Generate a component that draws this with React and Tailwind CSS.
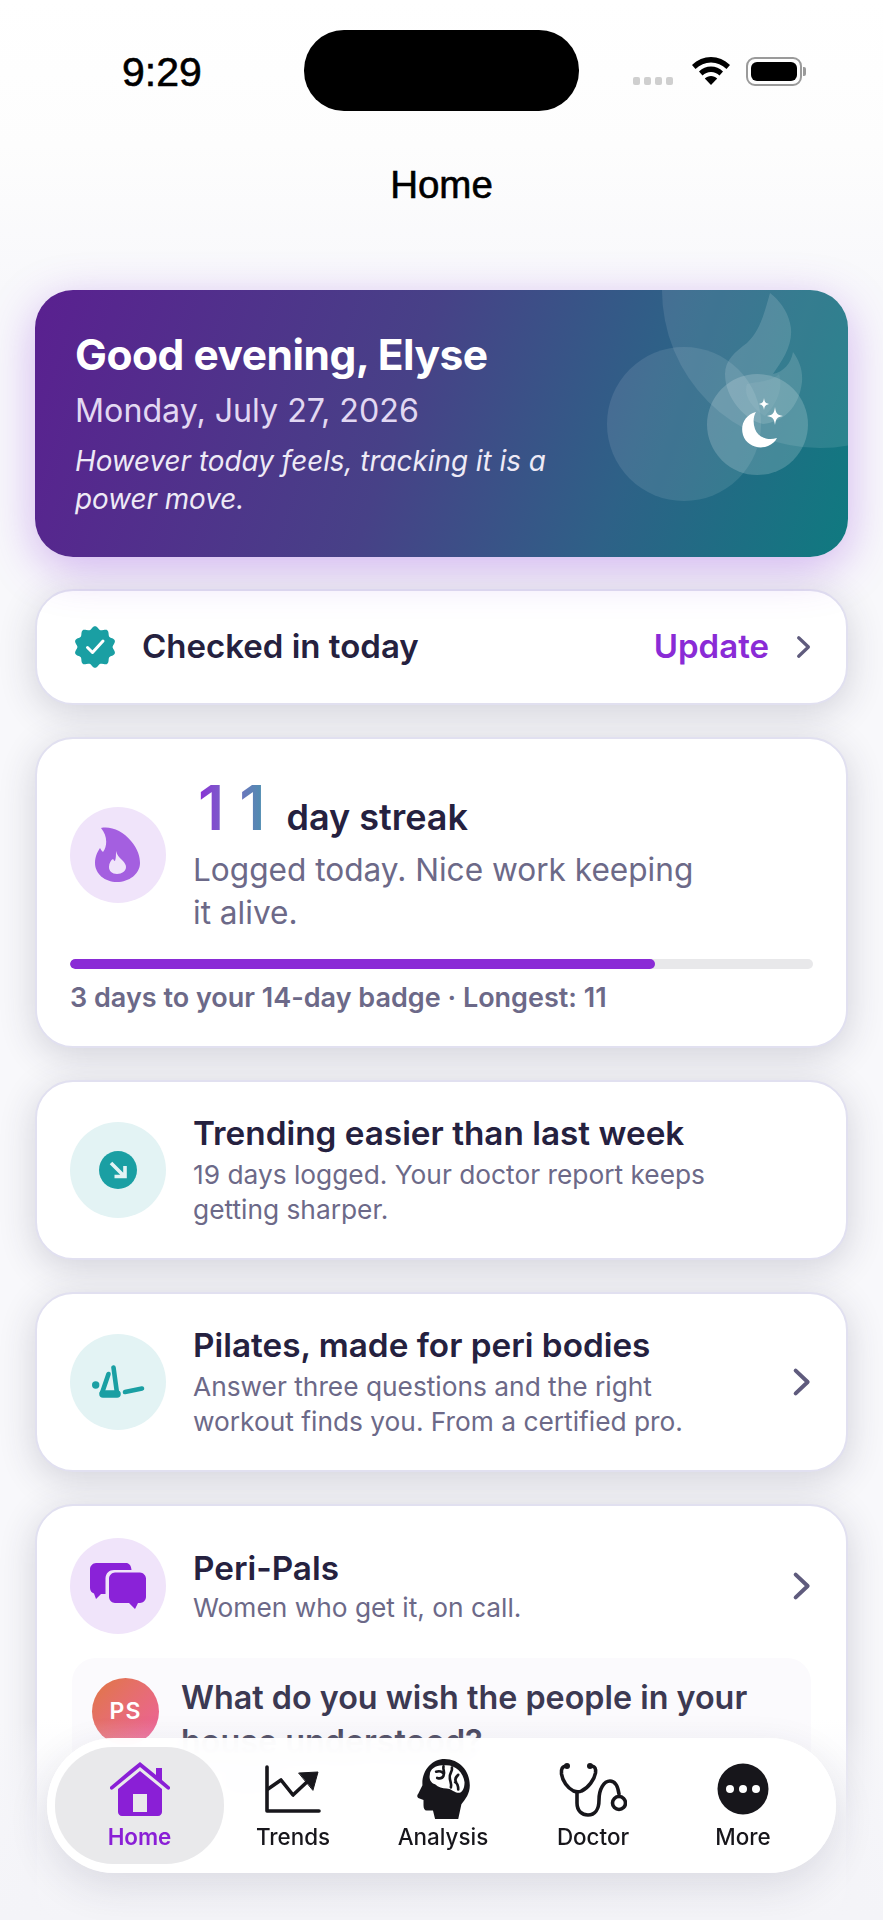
const inter = { fontFamily: "Inter, 'Noto Sans', sans-serif" };
const arial = { fontFamily: "'Liberation Sans', Arial, sans-serif" };

const badgePath = (() => {
  const pts = [];
  for (let i = 0; i < 200; i++) {
    const t = (i / 200) * Math.PI * 2;
    const r = 19.2 + 1.6 * Math.cos(10 * t);
    pts.push(`${(21 + r * Math.sin(t)).toFixed(2)} ${(21 - r * Math.cos(t)).toFixed(2)}`);
  }
  return `M${pts.join("L")}Z`;
})();

function Chevron({ size = 24, color = "#5f5b7d" }) {
  return (
    <svg width={size} height={size} viewBox="0 0 24 24" fill="none" stroke={color} strokeWidth="3" strokeLinecap="round" strokeLinejoin="round">
      <path d="M8 3.500 17 12l-9 8.500" />
    </svg>
  );
}

function Sub({ children, className = "mt-[4px]" }) {
  return <p className={`${className} text-[26.300px] leading-[35px] text-[#6c6988]`}>{children}</p>;
}

function Title({ children }) {
  return <h3 className="text-[33.300px] leading-[40px] font-semibold text-[#25213f]">{children}</h3>;
}

function Circle({ bg, children }) {
  return (
    <div className={`w-[96px] h-[96px] shrink-0 rounded-full flex items-center justify-center ${bg}`}>{children}</div>
  );
}

function Card({ className = "", children }) {
  return (
    <section className={`bg-white rounded-[38px] border-2 border-[#e1e0f0] shadow-[0_8px_36px_rgba(50,50,75,0.19)] ${className}`}>
      {children}
    </section>
  );
}

function Hero() {
  return (
    <section className="relative h-[267px] rounded-[38px] overflow-hidden bg-[linear-gradient(108deg,#5a2090_0%,#474187_45%,#2e6187_72%,#0f7a80_100%)] shadow-[0_12px_46px_rgba(140,60,220,0.36)] pl-[40px] pt-[41px]">
      <div className="absolute left-[627px] top-[-158px] w-[316px] h-[316px] rounded-full bg-white/10" />
      <div className="absolute left-[572px] top-[57px] w-[154px] h-[154px] rounded-full bg-white/10" />
      <svg className="absolute left-[686px] top-[0px]" width="90" height="140" viewBox="0 0 90 140" fill="#ffffff" fillOpacity="0.14">
        <path d="M49 3C44 20 40 40 26 53 14 62 4 70 4 84 4 108 24 130 42 134 62 132 78 118 81 92 82 80 78 70 72 62 70 74 62 82 52 84 62 70 74 52 69 33 66 20 58 10 49 3Z" />
        <path d="M58 84C62 96 58 112 44 126 30 118 22 104 26 94 34 92 50 92 58 84Z" fillOpacity="0.06" />
      </svg>
      <div className="absolute left-[672px] top-[84px] w-[101px] h-[101px] rounded-full bg-white/[0.18]" />
      <svg className="absolute left-[703px] top-[108px]" width="52" height="52" viewBox="0 0 52 52" fill="#ffffff">
        <path d="M18 14C7 17 2 27 5 37c3 10 15 15 25 11 4-2 7-4 9-8-10 3-19-1-22-9-2-6-2-12 1-17Z" />
        <path d="M26 0c.6 4 1.400 5 5 6-3.600 1-4.400 2-5 6-.6-4-1.400-5-5-6 3.600-1 4.400-2 5-6Z" />
        <path d="M37 9c1 6.500 2 8 8 9-6 1-7 2.500-8 9-1-6.500-2-8-8-9 6-1 7-2.500 8-9Z" />
      </svg>
      <div className="relative">
        <h1 className="text-[42.500px] leading-[48px] font-bold text-white tracking-[-0.5px]">Good evening, Elyse</h1>
        <p className="mt-[12px] text-[32.200px] leading-[40px] text-[#e2d8f2]">Monday, July 27, 2026</p>
        <p className="mt-[11px] w-[500px] text-[27.800px] leading-[38px] italic text-[#eeeaf6]">However today feels, tracking it is a power move.</p>
      </div>
    </section>
  );
}

function CheckedIn() {
  return (
    <Card className="h-[116px] flex items-center pl-[37px] pr-[30px]">
      <svg width="42" height="42" viewBox="0 0 42 42" className="shrink-0">
        <path fill="#1a9fa3" d={badgePath} />
        <path d="M13.500 21.500l5 5L29 15" fill="none" stroke="#fff" strokeWidth="3" strokeLinecap="round" strokeLinejoin="round" />
      </svg>
      <span className="ml-[26px] text-[33px] font-semibold text-[#25213f]">Checked in today</span>
      <span className="ml-auto text-[33px] font-semibold text-[#8a2bd6]">Update</span>
      <span className="ml-[21px]"><Chevron size={26} /></span>
    </Card>
  );
}

function Streak() {
  return (
    <Card className="h-[311px] pl-[33px] pr-[33px] pt-[37px]">
      <div className="flex items-center gap-[27px]">
        <Circle bg="bg-[#f0e4fa]">
          <svg width="46" height="56" viewBox="0 0 46 56">
            <path fill="#a45fe0" fillRule="evenodd" d="M6 1C16-1 28 4 36 14 43 22 45 30 45 36 45 47 34 55 22 55 10 55 0 47 0 36 0 29 3 24 5 21 6 23 7 24 8 25 13 18 12 8 6 1ZM21 24C22 28 24 30 27 33 30 36 31 38 31 40 31 44 27 47 22 47 17 47 14 44 14 40 14 36 16 33 18 32 19 33 19 34 20 34 21 31 21 28 21 24Z" />
          </svg>
        </Circle>
        <div className="w-[520px]">
          <div className="flex items-baseline">
            <span className="text-[62px] leading-[64px] font-semibold tracking-[15px] text-transparent bg-clip-text bg-gradient-to-r from-[#8a2bd6] to-[#1a9fa3] ml-[5px]">11</span>
            <span className="ml-[6px] text-[36px] font-semibold text-[#25213f] leading-[40px]">day streak</span>
          </div>
          <p className="mt-[8px] text-[31.600px] leading-[43px] text-[#6c6988]">Logged today. Nice work keeping it alive.</p>
        </div>
      </div>
      <div className="mt-[25px] h-[10px] rounded-full bg-[#e8e8ea] overflow-hidden">
        <div className="h-full w-[78.700%] rounded-full bg-[#8a2bd6]" />
      </div>
      <p className="mt-[13px] text-[27px] leading-[32px] font-semibold text-[#6c6988]">3 days to your 14-day badge · Longest: 11</p>
    </Card>
  );
}

function Trending() {
  return (
    <Card className="h-[180px] flex items-center pl-[33px] pr-[34px]">
      <Circle bg="bg-[#e3f3f4]">
        <svg width="38" height="38" viewBox="0 0 38 38">
          <circle cx="19" cy="19" r="19" fill="#1a9fa3" />
          <path d="M12 12l13 13M26 15v10.500H15.500" fill="none" stroke="#e3f3f4" strokeWidth="3.600" />
        </svg>
      </Circle>
      <div className="ml-[27px] -mt-[1px]">
        <Title>Trending easier than last week</Title>
        <Sub>19 days logged. Your doctor report keeps<br />getting sharper.</Sub>
      </div>
    </Card>
  );
}

function Pilates() {
  return (
    <Card className="h-[180px] flex items-center pl-[33px] pr-[29px]">
      <Circle bg="bg-[#e3f3f4]">
        <svg width="53" height="34" viewBox="0 0 53 34" fill="none" stroke="#1a9fa3" strokeLinecap="round" strokeLinejoin="round">
          <circle cx="3.700" cy="20" r="3.700" fill="#1a9fa3" stroke="none" />
          <path d="M21.500 2.500 25 28" strokeWidth="4.600" />
          <path d="M16.500 9 10 28" strokeWidth="4.600" />
          <path d="M11 29H25" strokeWidth="7.500" />
          <path d="M33 27 50 23.500" strokeWidth="4.600" />
        </svg>
      </Circle>
      <div className="ml-[27px] flex-1 -mt-[1px]">
        <Title>Pilates, made for peri bodies</Title>
        <Sub>Answer three questions and the right<br />workout finds you. From a certified pro.</Sub>
      </div>
      <Chevron size={32} />
    </Card>
  );
}

function PeriPals() {
  return (
    <Card className="h-[420px] pl-[33px] pr-[29px] pt-[32px]">
      <div className="flex items-center">
        <Circle bg="bg-[#f0e4fa]">
          <svg width="56" height="46" viewBox="0 0 56 46" fill="#8a22d8">
            <path d="M6 0h30c3 0 5 2 5.500 7H24c-5 0-8 3-8.500 8v16H11l-5 5-2-5.500C2 30 0 28 0 25V6c0-3 3-6 6-6Z" />
            <path d="M25 9.500h25c3 0 6 3 6 6V34c0 3-3 6-6 6h-2l-3 6-6-6H25c-3 0-6-3-6-6V15.500c0-3 3-6 6-6Z" />
          </svg>
        </Circle>
        <div className="ml-[27px] flex-1">
          <Title>Peri-Pals</Title>
          <Sub className="mt-[2px]">Women who get it, on call.</Sub>
        </div>
        <Chevron size={32} />
      </div>
      <div className="mt-[24px] ml-[2px] mr-[6px] rounded-[24px] bg-[#fbfafd] pl-[20px] pr-[10px] pt-[20px] pb-[16px] flex gap-[22px]">
        <div className="w-[67px] h-[67px] shrink-0 rounded-full bg-gradient-to-br from-[#e0763f] to-[#ee5f9d] text-white font-semibold text-[23px] flex items-center justify-center tracking-[1px]">PS</div>
        <div className="-mt-[2px]">
          <p className="text-[32.300px] leading-[44px] font-semibold text-[#3c3952] whitespace-nowrap">What do you wish the people in your<br />house understood?</p>
          <p className="text-[26px] leading-[36px] text-[#6c6988]">12 replies</p>
        </div>
      </div>
    </Card>
  );
}

function HomeIcon() {
  return (
    <svg width="60" height="54" viewBox="0 0 60 54" fill="#8a1fd6">
      <path d="M30 0 20 8 .5 24.500c-.8.700-.8 1.800-.2 2.500.6.800 1.700.8 2.500.2L30 5l27.200 22.200c.8.600 1.900.600 2.500-.2.600-.7.600-1.800-.2-2.500L52 18V6h-6v7L30 0Z" />
      <path fillRule="evenodd" d="M30 9 8 27v23c0 2.200 1.800 4 4 4h36c2.200 0 4-1.800 4-4V27L30 9ZM23 32h14v18H23V32Z" />
    </svg>
  );
}
function TrendsIcon() {
  return (
    <svg width="56" height="48" viewBox="0 0 56 48" fill="none" stroke="#17161b" strokeWidth="3.600" strokeLinecap="round" strokeLinejoin="round">
      <path d="M2 2v44h52" />
      <path d="M3 24l13-9 12 15 15-14" />
      <path d="M34 8 53 7l-5 18Z" fill="#17161b" strokeWidth="1" />
    </svg>
  );
}
function BrainIcon() {
  return (
    <svg width="53" height="60" viewBox="0 0 50 57">
      <path fill="#17161b" d="M26 0C40 0 50 11 50 25 50 33 46 38 42 43L39 57H17L15 49H9C7 49 6 47 6 44V39L1 37C-.5 36 0 34 1 33L5 25C4 11 14 0 26 0Z" />
      <path fill="#fff" d="M12 15C12 9 19 5 26 6 35 5 44 12 45 22 45 29 42 33 38 32 34 31 32 28 28 28 24 28 20 27 17 24 13 23 11 19 12 15Z" />
      <path d="M18 12c3-1 6 0 7 2M25 7c-1 4 2 5 0 9-1 2-3 3-6 2M33 8c1 4-3 6-2 10 0 3 2 5 1 9M39 15c-2 2-4 4-2 7M36 22c2 1 3 3 3 7" stroke="#17161b" strokeWidth="2.500" strokeLinecap="round" fill="none" />
    </svg>
  );
}
function DoctorIcon() {
  return (
    <svg width="68" height="56" viewBox="0 0 68 56" fill="none" stroke="#17161b" strokeWidth="3.600" strokeLinecap="round">
      <path d="M8 5C3 5 2 8 2.500 13c1 7 6 14 12 17 3 1 6 1 8 0 7-3 13-12 14-18 .5-4 0-7-5-7" />
      <path d="M18 31v11c0 8 5 12 11 12 7 0 11-6 11-15 0-11 5-19 11-19 5 0 8 6 9 13" />
      <circle cx="8" cy="5" r="3" fill="#17161b" stroke="none" />
      <circle cx="31" cy="5" r="3" fill="#17161b" stroke="none" />
      <circle cx="60" cy="42" r="6.500" fill="none" />
    </svg>
  );
}
function MoreIcon() {
  return (
    <svg width="52" height="52" viewBox="0 0 52 52">
      <circle cx="26" cy="26" r="25.500" fill="#17161b" />
      <circle cx="13" cy="26" r="4" fill="#fff" />
      <circle cx="26" cy="26" r="4" fill="#fff" />
      <circle cx="39" cy="26" r="4" fill="#fff" />
    </svg>
  );
}

function Tab({ icon, label, active }) {
  return (
    <div className={`flex flex-col items-center justify-end h-[117px] pb-[13px] rounded-[58px] ${active ? "w-[169px] bg-[#e9e9eb] text-[#8a1fd6]" : "w-[150px] text-[#17161b]"}`}>
      <div className="h-[60px] flex items-center justify-center">{icon}</div>
      <span className={`mt-[4px] text-[22.400px] leading-[28px] ${active ? "font-semibold" : "font-medium"}`}>{label}</span>
    </div>
  );
}

export default function App() {
  return (
    <div style={inter} className="relative w-[883px] h-[1920px] overflow-hidden bg-[#f8f8fb]">
      <div className="absolute inset-x-0 top-0 h-[290px] bg-gradient-to-b from-white via-[#fdfdfd] to-[#f8f8fb]" />
      <div className="relative">
        <header className="h-[162px] relative">
          <span style={arial} className="absolute left-[122px] top-[49px] text-[41px] leading-[46px] text-black [-webkit-text-stroke:0.6px_black]">9:29</span>
          <div className="absolute left-[304px] top-[30px] w-[275px] h-[81px] rounded-[40px] bg-black" />
          <div className="absolute left-[633px] top-[77px] flex gap-[4px]">
            <i className="w-[7px] h-[8px] rounded-[2px] bg-[#cfcfcf]" />
            <i className="w-[7px] h-[8px] rounded-[2px] bg-[#cfcfcf]" />
            <i className="w-[7px] h-[8px] rounded-[2px] bg-[#cfcfcf]" />
            <i className="w-[7px] h-[8px] rounded-[2px] bg-[#cfcfcf]" />
          </div>
          <svg className="absolute left-[692px] top-[57px]" width="38" height="28" viewBox="0 0 38 28" fill="black">
            <path d="M19 0C12 0 5.500 2.800 0 8l3.500 4C8 7.800 13 5.500 19 5.500S30 7.800 34.500 12L38 8C32.500 2.800 26 0 19 0Z" />
            <path d="M19 9.500c-4.600 0-8.600 1.800-12 5l3.500 4c2.400-2.200 5.200-3.500 8.500-3.500s6.100 1.300 8.500 3.500l3.500-4c-3.400-3.200-7.400-5-12-5Z" />
            <path d="M19 19c-2.400 0-4.500 1-6.200 2.500L19 28l6.200-6.500C23.500 20 21.400 19 19 19Z" />
          </svg>
          <div className="absolute left-[746px] top-[57px] w-[56px] h-[29px] rounded-[9px] border-2 border-[#9a9a9a] p-[3px]">
            <div className="w-full h-full rounded-[6px] bg-black" />
          </div>
          <div className="absolute left-[803px] top-[67px] w-[3px] h-[9px] rounded-r-[2px] bg-[#9a9a9a]" />
        </header>
        <div style={arial} className="h-[46px] text-center text-[38.500px] leading-[46px] text-black [-webkit-text-stroke:0.6px_black]">Home</div>
        <main className="px-[35px] pt-[82px] flex flex-col gap-[32px]">
          <Hero />
          <CheckedIn />
          <Streak />
          <Trending />
          <Pilates />
          <PeriPals />
        </main>
      </div>
      <div className="absolute inset-x-0 bottom-0 h-[200px] bg-gradient-to-b from-[#f5f5f9]/0 via-[#f5f5f9]/90 to-[#f4f4f8]" />
      <nav className="absolute left-[47px] top-[1738px] w-[789px] h-[135px] rounded-[67px] bg-white/95 backdrop-blur-md shadow-[0_14px_40px_rgba(40,40,70,0.12)] flex items-center pl-[8px]">
        <Tab active icon={<HomeIcon />} label="Home" />
        <div className="flex -ml-[6px]">
          <Tab icon={<TrendsIcon />} label="Trends" />
          <Tab icon={<BrainIcon />} label="Analysis" />
          <Tab icon={<DoctorIcon />} label="Doctor" />
          <Tab icon={<MoreIcon />} label="More" />
        </div>
      </nav>
    </div>
  );
}
